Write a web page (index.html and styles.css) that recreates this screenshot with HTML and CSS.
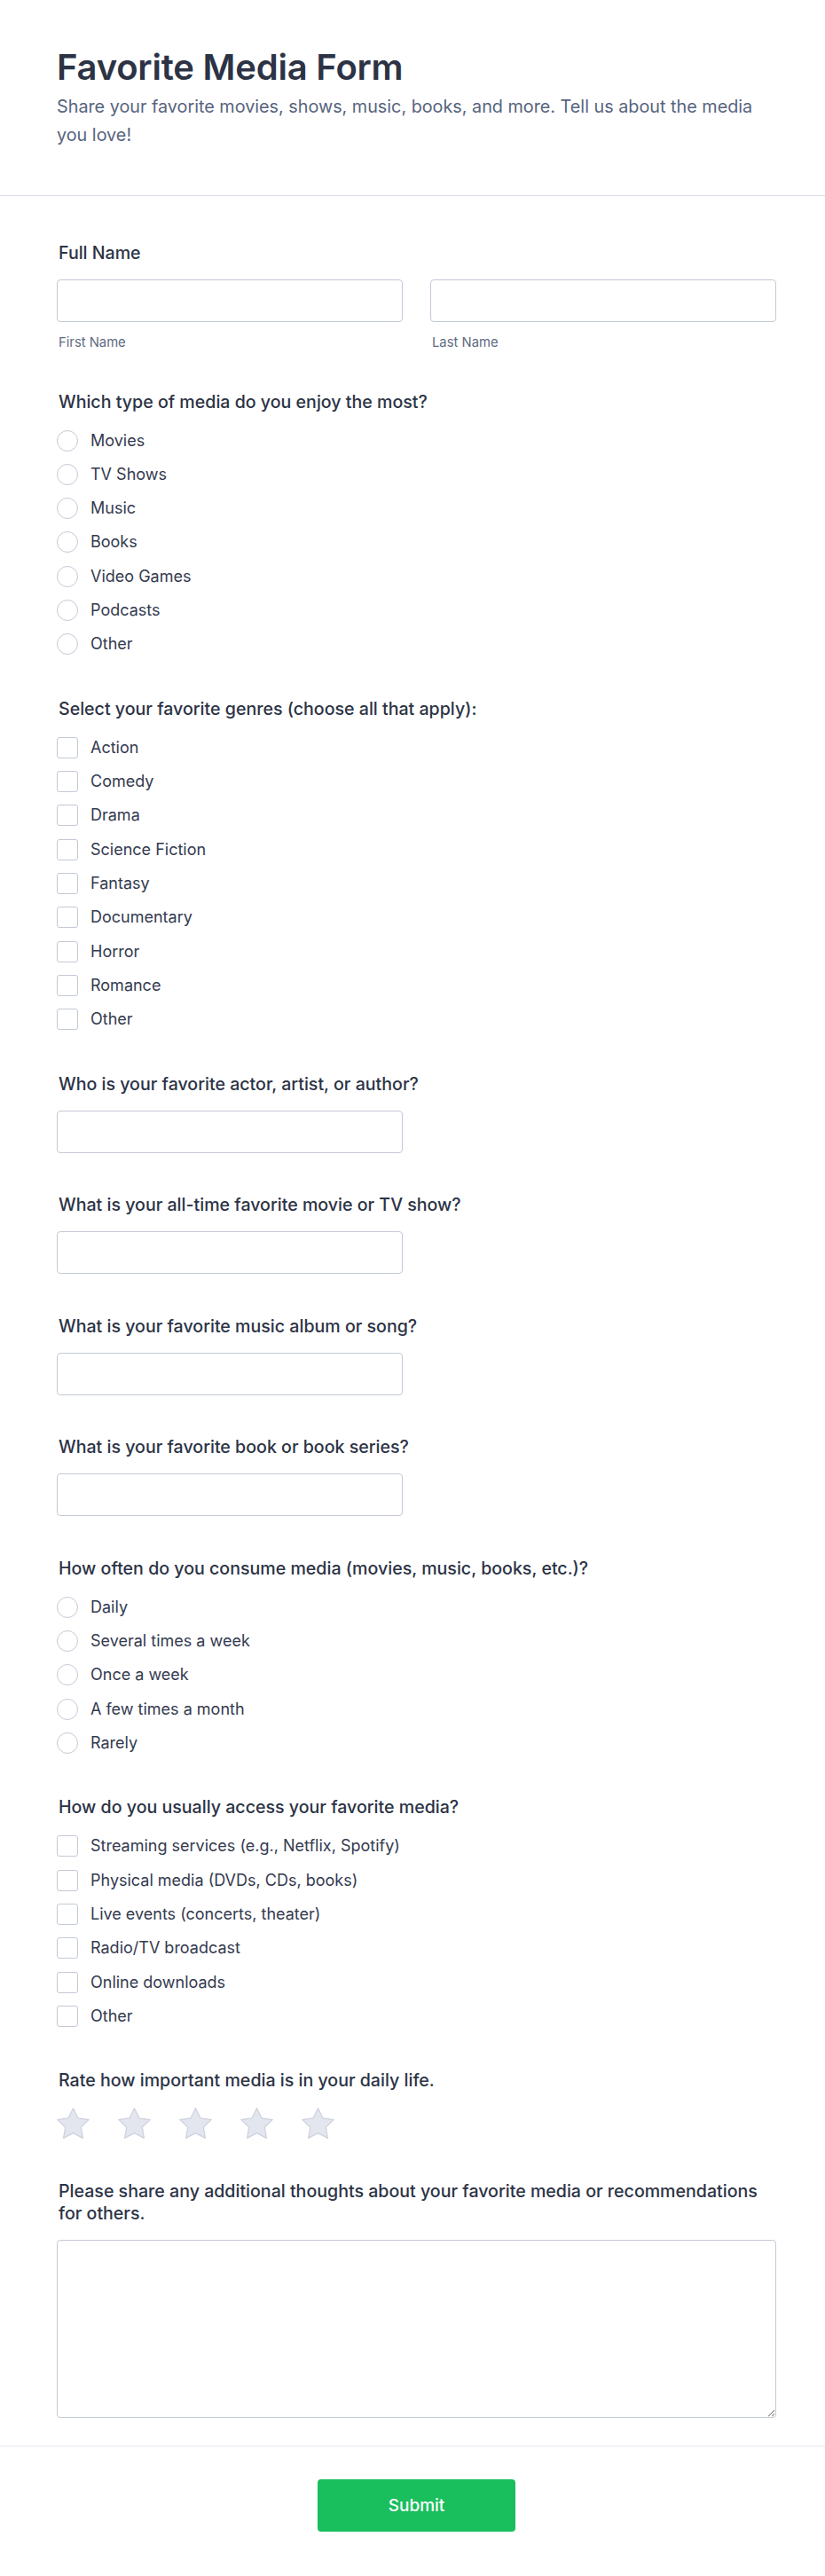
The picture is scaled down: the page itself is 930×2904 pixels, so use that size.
FILE: index.html
```html
<!DOCTYPE html>
<html lang="en">
<head>
<meta charset="utf-8">
<title>Favorite Media Form</title>
<link rel="stylesheet" href="styles.css">
</head>
<body>
<div class="card">
  <header class="form-header">
    <h1 class="form-title">Favorite Media Form</h1>
    <p class="form-subtitle">Share your favorite movies, shows, music, books, and more. Tell us about the media you love!</p>
  </header>

  <form class="form-body">
    <div class="field">
      <label class="field-label">Full Name</label>
      <div class="name-row">
        <div class="name-col">
          <input class="text-input" type="text">
          <span class="sub-label">First Name</span>
        </div>
        <div class="name-col">
          <input class="text-input" type="text">
          <span class="sub-label">Last Name</span>
        </div>
      </div>
    </div>

    <div class="field">
      <div class="field-label">Which type of media do you enjoy the most?</div>
      <div class="choice-list">
        <label class="choice"><span class="radio"></span><span>Movies</span></label>
        <label class="choice"><span class="radio"></span><span>TV Shows</span></label>
        <label class="choice"><span class="radio"></span><span>Music</span></label>
        <label class="choice"><span class="radio"></span><span>Books</span></label>
        <label class="choice"><span class="radio"></span><span>Video Games</span></label>
        <label class="choice"><span class="radio"></span><span>Podcasts</span></label>
        <label class="choice"><span class="radio"></span><span>Other</span></label>
      </div>
    </div>

    <div class="field">
      <div class="field-label">Select your favorite genres (choose all that apply):</div>
      <div class="choice-list">
        <label class="choice"><span class="checkbox"></span><span>Action</span></label>
        <label class="choice"><span class="checkbox"></span><span>Comedy</span></label>
        <label class="choice"><span class="checkbox"></span><span>Drama</span></label>
        <label class="choice"><span class="checkbox"></span><span>Science Fiction</span></label>
        <label class="choice"><span class="checkbox"></span><span>Fantasy</span></label>
        <label class="choice"><span class="checkbox"></span><span>Documentary</span></label>
        <label class="choice"><span class="checkbox"></span><span>Horror</span></label>
        <label class="choice"><span class="checkbox"></span><span>Romance</span></label>
        <label class="choice"><span class="checkbox"></span><span>Other</span></label>
      </div>
    </div>

    <div class="field">
      <label class="field-label">Who is your favorite actor, artist, or author?</label>
      <input class="text-input half" type="text">
    </div>

    <div class="field">
      <label class="field-label">What is your all-time favorite movie or TV show?</label>
      <input class="text-input half" type="text">
    </div>

    <div class="field">
      <label class="field-label">What is your favorite music album or song?</label>
      <input class="text-input half" type="text">
    </div>

    <div class="field">
      <label class="field-label">What is your favorite book or book series?</label>
      <input class="text-input half" type="text">
    </div>

    <div class="field">
      <div class="field-label">How often do you consume media (movies, music, books, etc.)?</div>
      <div class="choice-list">
        <label class="choice"><span class="radio"></span><span>Daily</span></label>
        <label class="choice"><span class="radio"></span><span>Several times a week</span></label>
        <label class="choice"><span class="radio"></span><span>Once a week</span></label>
        <label class="choice"><span class="radio"></span><span>A few times a month</span></label>
        <label class="choice"><span class="radio"></span><span>Rarely</span></label>
      </div>
    </div>

    <div class="field">
      <div class="field-label">How do you usually access your favorite media?</div>
      <div class="choice-list">
        <label class="choice"><span class="checkbox"></span><span>Streaming services (e.g., Netflix, Spotify)</span></label>
        <label class="choice"><span class="checkbox"></span><span>Physical media (DVDs, CDs, books)</span></label>
        <label class="choice"><span class="checkbox"></span><span>Live events (concerts, theater)</span></label>
        <label class="choice"><span class="checkbox"></span><span>Radio/TV broadcast</span></label>
        <label class="choice"><span class="checkbox"></span><span>Online downloads</span></label>
        <label class="choice"><span class="checkbox"></span><span>Other</span></label>
      </div>
    </div>

    <div class="field">
      <div class="field-label">Rate how important media is in your daily life.</div>
      <div class="stars">
        <svg class="star" viewBox="1.6 1.6 20.8 19.8"><path d="M12 2l3.09 6.26L22 9.27l-5 4.87 1.18 6.88L12 17.77l-6.18 3.25L7 14.14 2 9.27l6.91-1.01L12 2z"/></svg>
        <svg class="star" viewBox="1.6 1.6 20.8 19.8"><path d="M12 2l3.09 6.26L22 9.27l-5 4.87 1.18 6.88L12 17.77l-6.18 3.25L7 14.14 2 9.27l6.91-1.01L12 2z"/></svg>
        <svg class="star" viewBox="1.6 1.6 20.8 19.8"><path d="M12 2l3.09 6.26L22 9.27l-5 4.87 1.18 6.88L12 17.77l-6.18 3.25L7 14.14 2 9.27l6.91-1.01L12 2z"/></svg>
        <svg class="star" viewBox="1.6 1.6 20.8 19.8"><path d="M12 2l3.09 6.26L22 9.27l-5 4.87 1.18 6.88L12 17.77l-6.18 3.25L7 14.14 2 9.27l6.91-1.01L12 2z"/></svg>
        <svg class="star" viewBox="1.6 1.6 20.8 19.8"><path d="M12 2l3.09 6.26L22 9.27l-5 4.87 1.18 6.88L12 17.77l-6.18 3.25L7 14.14 2 9.27l6.91-1.01L12 2z"/></svg>
      </div>
    </div>

    <div class="field">
      <label class="field-label">Please share any additional thoughts about your favorite media or recommendations for others.</label>
      <textarea class="text-area"></textarea>
    </div>
  </form>

  <footer class="form-footer">
    <button class="submit-btn" type="button">Submit</button>
  </footer>
</div>
</body>
</html>
```

FILE: styles.css
```css
* { box-sizing: border-box; }

html, body {
  margin: 0;
  padding: 0;
  background: #ffffff;
}

body {
  font-family: Inter, "Noto Sans", "Liberation Sans", sans-serif;
  color: #2c3345;
}

.card {
  width: 930px;
  min-height: 2904px;
  background: #ffffff;
  display: flex;
  flex-direction: column;
}

.form-header {
  padding: 52px 55px 52px 64px;
  border-bottom: 1px solid #d9dde6;
}

.form-title {
  margin: 0;
  font-size: 40px;
  line-height: 48px;
  font-weight: 600;
  color: #2c3345;
  letter-spacing: -0.2px;
}

.form-subtitle {
  margin: 4px 0 0;
  font-size: 19.8px;
  line-height: 32px;
  color: #57647e;
}

.form-body {
  padding: 52px 55px 31px 64px;
  display: flex;
  flex-direction: column;
  gap: 46.5px;
}

.field {
  display: flex;
  flex-direction: column;
}

.field-label {
  display: block;
  padding-left: 2px;
  font-size: 19.6px;
  line-height: 25px;
  font-weight: 500;
  color: #2c3345;
  margin-bottom: 17px;
}

.name-row {
  display: flex;
  gap: 31px;
}

.name-col {
  flex: 1;
  display: flex;
  flex-direction: column;
}

.text-input {
  display: block;
  width: 100%;
  height: 48px;
  border: 1px solid #c3c9d6;
  border-radius: 4px;
  background: #ffffff;
  font: inherit;
  padding: 0 12px;
}

.text-input.half {
  width: 390px;
}

.sub-label {
  margin-top: 15px;
  padding-left: 2px;
  font-size: 14.8px;
  line-height: 16px;
  color: #5f6b82;
}

.choice-list {
  display: flex;
  flex-direction: column;
  gap: 10.3px;
}

.choice {
  display: flex;
  align-items: center;
  gap: 14px;
  min-height: 28px;
  font-size: 18px;
  line-height: 28px;
  color: #343a4f;
}

.radio {
  width: 24px;
  height: 24px;
  flex: none;
  border: 1.5px solid #c3c9d6;
  border-radius: 50%;
  background: #ffffff;
}

.checkbox {
  width: 24px;
  height: 24px;
  flex: none;
  border: 1.5px solid #c3c9d6;
  border-radius: 3px;
  background: #ffffff;
}

.stars {
  display: flex;
  gap: 32px;
  padding-top: 1px;
}

.star {
  width: 37px;
  height: 35px;
  display: block;
}

.star path {
  fill: #e3e6ef;
  stroke: #cdd2de;
  stroke-width: 0.7;
  stroke-linejoin: round;
}

.text-area {
  display: block;
  width: 100%;
  height: 201px;
  border: 1px solid #c3c9d6;
  border-radius: 4px;
  background: #ffffff;
  font: inherit;
  resize: vertical;
}

.form-footer {
  border-top: 1px solid #e6e8ef;
  padding: 37px 55px 50px 64px;
  display: flex;
  justify-content: center;
}

.submit-btn {
  width: 223px;
  height: 59px;
  border: none;
  border-radius: 4px;
  background: #19be5d;
  color: #ffffff;
  font-family: Inter, "Noto Sans", "Liberation Sans", sans-serif;
  font-size: 19px;
  font-weight: 500;
  cursor: pointer;
}
```
